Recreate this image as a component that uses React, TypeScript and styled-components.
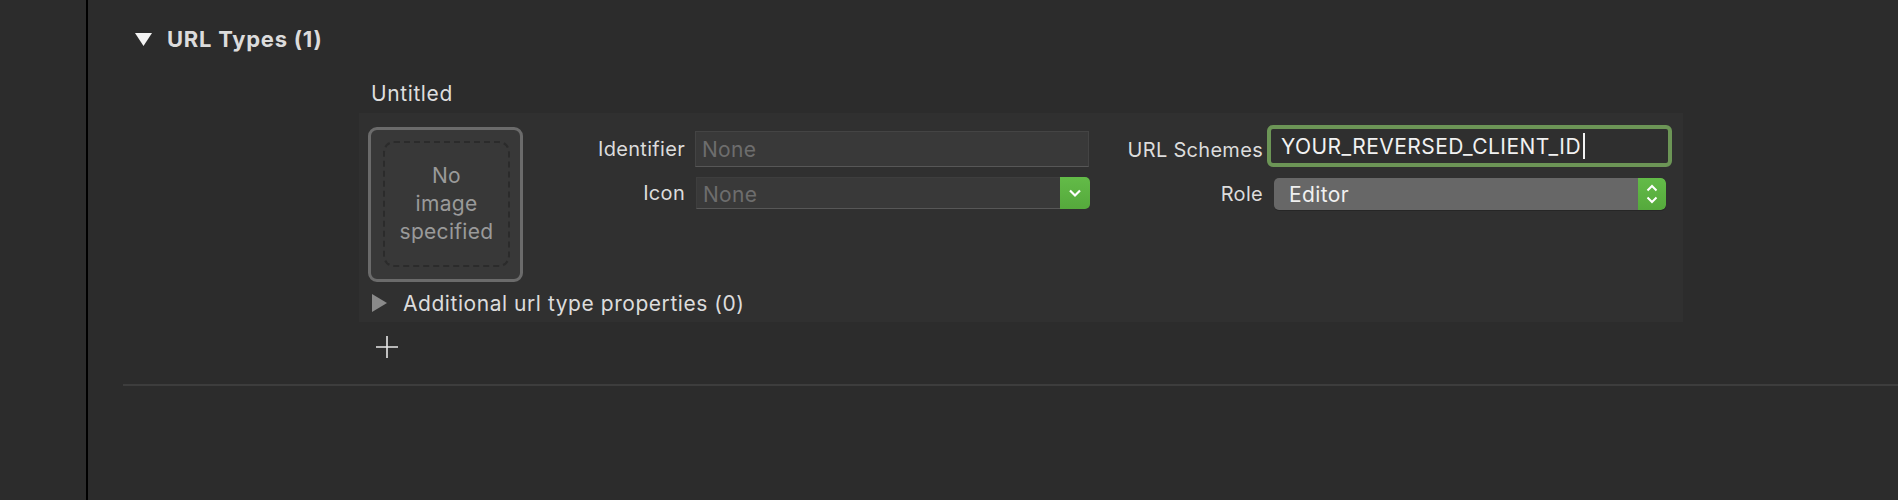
import styled, { createGlobalStyle } from "styled-components";

const GlobalStyle = createGlobalStyle`
    html, body {
        margin: 0;
        padding: 0;
        background-color: #2c2c2c;
    }
    body {
        font-family: "Inter", "Noto Sans", sans-serif;
        color: #dedede;
        -webkit-font-smoothing: antialiased;
    }
`;

const Page = styled.div`
    display: flex;
    width: 1898px;
    height: 500px;
    overflow: hidden;
    background-color: #2c2c2c;
`;

const Sidebar = styled.div`
    width: 86px;
    flex-shrink: 0;
    border-right: 2px solid #000;
`;

const Main = styled.div`
    flex: 1;
    display: flex;
    flex-direction: column;
    padding-top: 26px;
`;

const SectionHeader = styled.div`
    display: flex;
    align-items: center;
    gap: 15px;
    height: 26px;
    margin-left: 47px;
    font-size: 22px;
    font-weight: 700;
    letter-spacing: 0.75px;
    color: #dcdcdc;
    svg {
        width: 17px;
        height: 13px;
    }
`;

const Block = styled.div`
    margin-left: 271px;
    width: 1324px;
    display: flex;
    flex-direction: column;
`;

const ItemTitle = styled.div`
    margin-top: 29px;
    padding-left: 12px;
    height: 26px;
    line-height: 26px;
    font-size: 21px;
    letter-spacing: 0.6px;
`;

const Panel = styled.div`
    margin-top: 6px;
    background-color: #303030;
    padding: 14px 9px 7px;
    display: flex;
    flex-direction: column;
`;

const TopRow = styled.div`
    display: flex;
    align-items: flex-start;
`;

const ImageWell = styled.div`
    width: 155px;
    height: 155px;
    box-sizing: border-box;
    border: 3px solid #6b6b6b;
    border-radius: 9px;
    background-color: #383838;
    padding: 11px 10px 12px 12px;
    flex-shrink: 0;
`;

const WellInner = styled.div`
    height: 100%;
    box-sizing: border-box;
    border: 2px dashed #2b2b2b;
    border-radius: 11px;
    display: flex;
    align-items: center;
    justify-content: center;
    text-align: center;
    font-size: 21px;
    line-height: 28px;
    letter-spacing: 0.3px;
    color: #9a9a9a;
`;

const FieldGroup = styled.div<{ $top: number; $gap: number; $labelWidth: number }>`
    display: flex;
    flex-direction: column;
    margin-top: ${(p) => p.$top}px;
    gap: ${(p) => p.$gap}px;
    --label-width: ${(p) => p.$labelWidth}px;
`;

const FieldRow = styled.div<{ $gap: number }>`
    display: flex;
    align-items: center;
    gap: ${(p) => p.$gap}px;
`;

const Label = styled.div<{ $shift?: number }>`
    width: var(--label-width);
    text-align: right;
    font-size: 20px;
    letter-spacing: 0.3px;
    color: #dcdcdc;
    white-space: nowrap;
    padding-top: ${(p) => (p.$shift ?? 0) * 2}px;
`;

const TextField = styled.div<{ $width: number }>`
    width: ${(p) => p.$width}px;
    height: 36px;
    box-sizing: border-box;
    background-color: #393939;
    border: 1px solid #444;
    border-bottom-color: #575757;
    display: flex;
    align-items: center;
    padding-left: 6px;
    font-size: 21px;
    letter-spacing: 0.3px;
`;

const Placeholder = styled.span`
    color: #6d6d6d;
`;

const Combo = styled.div<{ $width: number }>`
    width: ${(p) => p.$width}px;
    height: 32px;
    display: flex;
`;

const ComboField = styled.div`
    flex: 1;
    box-sizing: border-box;
    background-color: #393939;
    border: 1px solid #3e3e3e;
    border-bottom-color: #575757;
    border-right: 0;
    display: flex;
    align-items: center;
    padding-left: 6px;
    padding-top: 3px;
    font-size: 21px;
    letter-spacing: 0.3px;
`;

const GreenButton = styled.div<{ $width: number }>`
    width: ${(p) => p.$width}px;
    flex-shrink: 0;
    background: linear-gradient(#63bb48, #55a93c);
    border-radius: 0 5px 5px 0;
    display: flex;
    align-items: center;
    justify-content: center;
    svg {
        display: block;
    }
`;

const FocusRing = styled.div<{ $width: number }>`
    width: ${(p) => p.$width}px;
    height: 42px;
    box-sizing: border-box;
    border: 4px solid #6c9556;
    border-radius: 6px;
    background-color: #2f2f2f;
    display: flex;
    align-items: center;
    padding-left: 10px;
    font-size: 21px;
    letter-spacing: 0.45px;
    color: #f2f2f2;
`;

const Caret = styled.span`
    display: inline-block;
    width: 2px;
    height: 26px;
    margin-left: 2px;
    background-color: #f2f2f2;
`;

const PopUp = styled.div<{ $width: number }>`
    width: ${(p) => p.$width}px;
    height: 32px;
    display: flex;
    border-radius: 5px;
    overflow: hidden;
    box-shadow: 0 1px 0 #262626;
`;

const PopUpValue = styled.div`
    flex: 1;
    background-color: #676767;
    display: flex;
    align-items: center;
    padding-left: 15px;
    font-size: 21px;
    letter-spacing: 0.4px;
    color: #f0f0f0;
`;

const AdditionalRow = styled.div`
    margin-top: 9px;
    height: 24px;
    display: flex;
    align-items: center;
    gap: 16px;
    padding-left: 4px;
    font-size: 21px;
    letter-spacing: 0.55px;
    color: #dcdcdc;
    svg {
        width: 15px;
        height: 18px;
    }
`;

const AddButton = styled.div`
    margin-top: 14px;
    margin-left: 17px;
    width: 22px;
    height: 22px;
    svg {
        display: block;
    }
`;

const Divider = styled.div`
    margin-top: 26px;
    margin-left: 35px;
    height: 2px;
    background-color: #3d3d3d;
`;

const ChevronDown = () => (
    <svg width="14" height="10" viewBox="0 0 14 10">
        <path d="M2 2.5l5 5 5-5" fill="none" stroke="#fff" strokeWidth="2.2" />
    </svg>
);

const ChevronUpDown = () => (
    <svg width="14" height="24" viewBox="0 0 14 24">
        <path d="M2.5 8.5l4.5-4.5 4.5 4.5M2.5 15.5l4.5 4.5 4.5-4.5" fill="none" stroke="#fff" strokeWidth="2" />
    </svg>
);

export default function App() {
    return (
        <>
            <GlobalStyle />
            <Page>
                <Sidebar />
                <Main>
                    <SectionHeader>
                        <svg viewBox="0 0 17 13">
                            <polygon points="0,0 17,0 8.5,13" fill="#f4f4f4" />
                        </svg>
                        URL Types (1)
                    </SectionHeader>
                    <Block>
                        <ItemTitle>Untitled</ItemTitle>
                        <Panel>
                            <TopRow>
                                <ImageWell>
                                    <WellInner>
                                        No
                                        <br />
                                        image
                                        <br />
                                        specified
                                    </WellInner>
                                </ImageWell>
                                <FieldGroup $top={4} $gap={10} $labelWidth={162}>
                                    <FieldRow $gap={10}>
                                        <Label>Identifier</Label>
                                        <TextField $width={394}>
                                            <Placeholder>None</Placeholder>
                                        </TextField>
                                    </FieldRow>
                                    <FieldRow $gap={11}>
                                        <Label>Icon</Label>
                                        <Combo $width={394}>
                                            <ComboField>
                                                <Placeholder>None</Placeholder>
                                            </ComboField>
                                            <GreenButton $width={30}>
                                                <ChevronDown />
                                            </GreenButton>
                                        </Combo>
                                    </FieldRow>
                                </FieldGroup>
                                <FieldGroup $top={-2} $gap={11} $labelWidth={173}>
                                    <FieldRow $gap={4}>
                                        <Label $shift={4}>URL Schemes</Label>
                                        <FocusRing $width={405}>
                                            YOUR_REVERSED_CLIENT_ID
                                            <Caret />
                                        </FocusRing>
                                    </FieldRow>
                                    <FieldRow $gap={11}>
                                        <Label>Role</Label>
                                        <PopUp $width={392}>
                                            <PopUpValue>Editor</PopUpValue>
                                            <GreenButton $width={28}>
                                                <ChevronUpDown />
                                            </GreenButton>
                                        </PopUp>
                                    </FieldRow>
                                </FieldGroup>
                            </TopRow>
                            <AdditionalRow>
                                <svg viewBox="0 0 15 18">
                                    <polygon points="0,0 15,9 0,18" fill="#8a8a8a" />
                                </svg>
                                Additional url type properties (0)
                            </AdditionalRow>
                        </Panel>
                        <AddButton>
                            <svg width="22" height="22" viewBox="0 0 22 22">
                                <path d="M11 0v22M0 11h22" stroke="#e6e6e6" strokeWidth="1.6" />
                            </svg>
                        </AddButton>
                    </Block>
                    <Divider />
                </Main>
            </Page>
        </>
    );
}
